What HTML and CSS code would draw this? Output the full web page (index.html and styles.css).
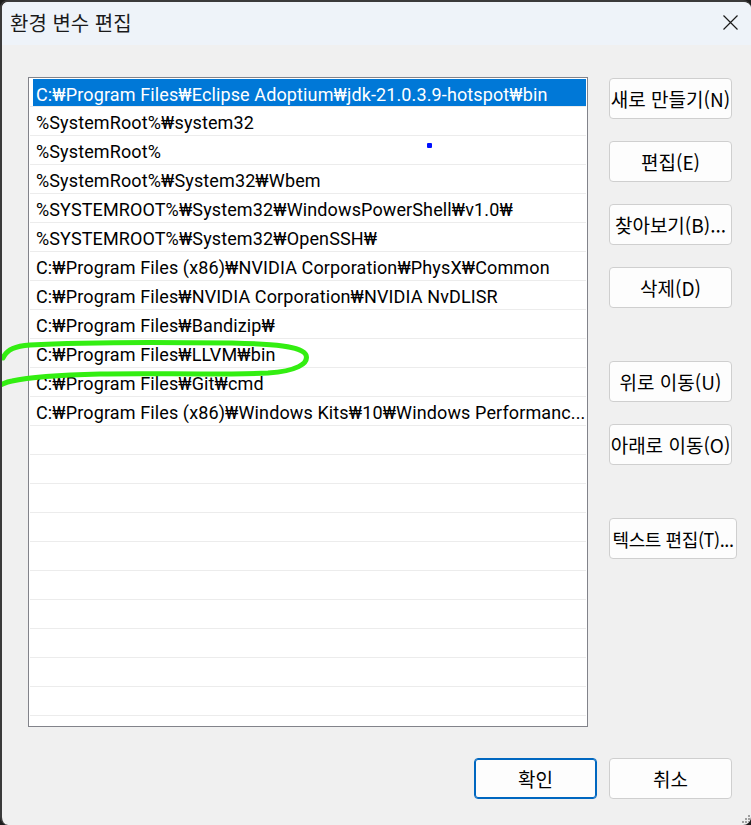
FILE: index.html
```html
<!DOCTYPE html>
<html lang="ko">
<head>
  <meta charset="UTF-8" />
  <title>환경 변수 편집</title>
  <link rel="stylesheet" href="styles.css">
</head>
<body>

<div class="window">
  <div class="titlebar">
    <span class="title">환경 변수 편집</span>
    <svg class="close" width="15" height="15" viewBox="0 0 15 15">
      <path d="M0.5 0.5 L14.5 14.5 M14.5 0.5 L0.5 14.5" stroke="#1a1a1a" stroke-width="1.2" fill="none"/>
    </svg>
  </div>

  <div class="content">
    <div class="list">
      <div class="row selected"><span>C:₩Program Files₩Eclipse Adoptium₩jdk-21.0.3.9-hotspot₩bin</span></div>
      <div class="row">%SystemRoot%₩system32</div>
      <div class="row">%SystemRoot%</div>
      <div class="row">%SystemRoot%₩System32₩Wbem</div>
      <div class="row">%SYSTEMROOT%₩System32₩WindowsPowerShell₩v1.0₩</div>
      <div class="row">%SYSTEMROOT%₩System32₩OpenSSH₩</div>
      <div class="row">C:₩Program Files (x86)₩NVIDIA Corporation₩PhysX₩Common</div>
      <div class="row">C:₩Program Files₩NVIDIA Corporation₩NVIDIA NvDLISR</div>
      <div class="row">C:₩Program Files₩Bandizip₩</div>
      <div class="row">C:₩Program Files₩LLVM₩bin</div>
      <div class="row">C:₩Program Files₩Git₩cmd</div>
      <div class="row">C:₩Program Files (x86)₩Windows Kits₩10₩Windows Performanc...</div>
      <div class="row"></div>
      <div class="row"></div>
      <div class="row"></div>
      <div class="row"></div>
      <div class="row"></div>
      <div class="row"></div>
      <div class="row"></div>
      <div class="row"></div>
      <div class="row"></div>
      <div class="row"></div>
      <div class="row"></div>
    </div>

    <div class="side">
      <button class="btn">새로 만들기(N)</button>
      <button class="btn">편집(E)</button>
      <button class="btn">찾아보기(B)...</button>
      <button class="btn">삭제(D)</button>
      <button class="btn group">위로 이동(U)</button>
      <button class="btn">아래로 이동(O)</button>
      <button class="btn group wide">텍스트 편집(T)...</button>
    </div>
  </div>

  <div class="footer">
    <button class="btn primary">확인</button>
    <button class="btn">취소</button>
  </div>

  <svg class="grip" width="11" height="10" viewBox="0 0 11 10">
    <rect x="8" y="0" width="2" height="2" fill="#a0a0a0"/>
    <rect x="5" y="3" width="2" height="2" fill="#a0a0a0"/>
    <rect x="8" y="3" width="2" height="2" fill="#a0a0a0"/>
    <rect x="2" y="6" width="2" height="2" fill="#a0a0a0"/>
    <rect x="5" y="6" width="2" height="2" fill="#a0a0a0"/>
    <rect x="8" y="6" width="2" height="2" fill="#a0a0a0"/>
  </svg>

  <div class="dot"></div>

  <!-- hand drawn marker around the LLVM row -->
  <svg class="marker" width="320" height="60" viewBox="0 330 320 60">
    <path d="M3 358 C7 349 16 346 30 345 C80 342 160 342 232 343 C272 344 302 346 306 355 C309 364 296 371 268 373 C220 375 150 373 100 374 C60 375 30 377 12 381 C6 382 3 384 0 385"
          stroke="#33ee11" stroke-width="5" fill="none" stroke-linecap="round"/>
  </svg>
</div>

</body>
</html>
```

FILE: styles.css
```css
body {
  margin: 0;
  background: #1c1c1c;
  font-family: "Roboto", "Noto Sans CJK KR", sans-serif;
}
.window {
  position: relative;
  box-sizing: border-box;
  height: 825px;
  background: #f0f0f0;
  border-left: 2px solid #3a3a3a;
  border-top: 2px solid #3a3a3a;
  border-radius: 8px;
  overflow: hidden;
}
.titlebar {
  height: 43px;
  background: #eef3f9;
  display: flex;
  align-items: center;
  justify-content: space-between;
  padding: 0 13px 0 8px;
}
.title {
  font-family: "Noto Sans CJK KR", sans-serif;
  font-size: 20px;
  color: #1a1a1a;
  margin-top: -2px;
}
.close {
  margin-top: -2px;
}
.content {
  display: flex;
  padding: 32px 0 0 26px;
  gap: 21px;
}
.list {
  box-sizing: border-box;
  width: 560px;
  height: 650px;
  background: #fff;
  border: 1px solid #82838a;
  padding: 0 1px;
  overflow: hidden;
}
.row {
  box-sizing: border-box;
  height: 29px;
  border-bottom: 1px solid #ececec;
  font-size: 18px;
  letter-spacing: 0.12px;
  line-height: 28px;
  padding: 2px 0 0 6px;
  white-space: nowrap;
  color: #000;
}
.row.selected {
  padding: 1px 0 0 3px;
}
.row.selected span {
  display: block;
  background: #0078d7;
  color: #fff;
  padding: 2px 0 0 3px;
  height: 27px;
  box-sizing: border-box;
  line-height: 27px;
}
.side {
  display: flex;
  flex-direction: column;
  align-items: flex-start;
  padding-top: 1px;
  gap: 22px;
}
.btn {
  box-sizing: border-box;
  width: 123px;
  height: 41px;
  padding: 0;
  background: #fdfdfd;
  border: 1px solid #cfcfcf;
  border-radius: 4px;
  font-family: "Noto Sans CJK KR", "Roboto", sans-serif;
  font-size: 19px;
  color: #000;
  white-space: nowrap;
}
.btn.group {
  margin-top: 31px;
}
.btn.wide {
  width: 128px;
  font-size: 18px;
  letter-spacing: -0.4px;
}
.btn.primary {
  border: 1px solid #0067c0;
  box-shadow: inset 0 0 0 1px #0067c0;
}
.footer {
  display: flex;
  justify-content: flex-end;
  gap: 12px;
  padding: 31px 19px 0 0;
}
.grip {
  position: absolute;
  right: 0;
  bottom: 0;
}
.dot {
  position: absolute;
  left: 425px;
  top: 141px;
  width: 5px;
  height: 5px;
  background: #0010ff;
  border-radius: 1px;
}
.marker {
  position: absolute;
  left: -2px;
  top: 328px;
}
```
